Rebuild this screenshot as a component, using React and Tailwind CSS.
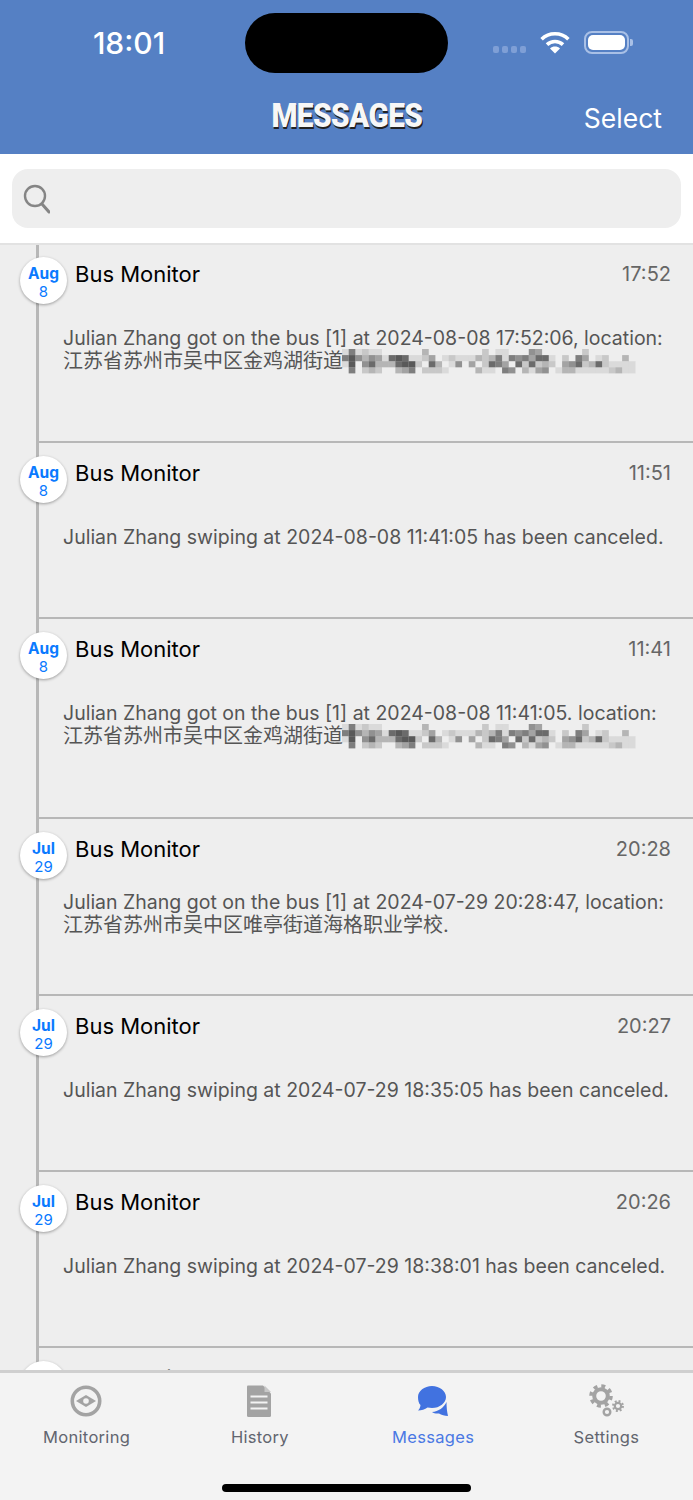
import React from "react";

const SANS = "font-['Inter','Noto_Sans_CJK_SC',sans-serif]";

const messages = [
  { month: "Aug", day: "8", time: "17:52", h: "h-[199px]", text: "Julian Zhang got on the bus [1] at 2024-08-08 17:52:06, location:", addr: "江苏省苏州市吴中区金鸡湖街道", blurred: true },
  { month: "Aug", day: "8", time: "11:51", h: "h-[176.3px]", text: "Julian Zhang swiping at 2024-08-08 11:41:05 has been canceled." },
  { month: "Aug", day: "8", time: "11:41", h: "h-[200px]", text: "Julian Zhang got on the bus [1] at 2024-08-08 11:41:05. location:", addr: "江苏省苏州市吴中区金鸡湖街道", blurred: true },
  { month: "Jul", day: "29", time: "20:28", h: "h-[176.3px]", gap: "mt-[27px]", text: "Julian Zhang got on the bus [1] at 2024-07-29 20:28:47, location:", addr: "江苏省苏州市吴中区唯亭街道海格职业学校." },
  { month: "Jul", day: "29", time: "20:27", h: "h-[176.3px]", text: "Julian Zhang swiping at 2024-07-29 18:35:05 has been canceled." },
  { month: "Jul", day: "29", time: "20:26", h: "h-[176.3px]", text: "Julian Zhang swiping at 2024-07-29 18:38:01 has been canceled." },
  { month: "Jul", day: "29", time: "20:25", h: "h-[176.3px]", text: "" },
];

// pixelated address, one digit per block = darkness
const MOSAIC = [
  "16121100000030000000020110005400000020000000",
  "68535417871124012111323616564771020640120030",
  "18057333788207301504027640727232045723721111",
  "06023200346022210000311065031450133111112311",
];

function Mosaic() {
  return (
    <svg className="inline-block align-top overflow-visible" width="294" height="23" viewBox="0 0 294 23">
      {MOSAIC.map((row, y) =>
        row.split("").map((d, x) =>
          d === "0" ? null : (
            <rect key={y + "-" + x} x={x * 6.67 - 1} y={y * 6.1 - 1} width="6.67" height="6.1" fill="#333" opacity={Number(d) / 10} />
          )
        )
      )}
    </svg>
  );
}

function StatusIcons() {
  return (
    <div className="flex items-center">
      <div className="flex gap-[3px] mt-[13px] mr-[14px]">
        {[0, 1, 2, 3].map((i) => (
          <div key={i} className="w-[6px] h-[7px] rounded-[2px] bg-[#7f9fd6]" />
        ))}
      </div>
      <svg width="30" height="24" viewBox="0 0 30 24" fill="none" stroke="#fff" strokeWidth="3.6" className="mr-[14px] -mt-[3px]">
        <path d="M1.6 9.2C9 2 21 2 28.4 9.2" />
        <path d="M7 14.6c4.4-4.2 11.6-4.2 16 0" />
        <path d="M15 23.5l-5-5c2.800-2.600 7.200-2.600 10 0z" fill="#fff" stroke="none" />
      </svg>
      <div className="w-[45px] h-[23px] rounded-[8px] border-2 border-[#a9c0e6] p-[2px] -mt-[2px]">
        <div className="w-full h-full rounded-[5px] bg-white" />
      </div>
      <div className="w-[3px] h-[7px] rounded-r-[2px] bg-[#a9c0e6] ml-[1px] -mt-[2px]" />
    </div>
  );
}

function Row({ m }) {
  return (
    <div className={"relative ml-[36px] border-l-[3px] border-b-2 border-[#b7b7b7] " + m.h}>
      <div className="absolute left-[-19px] top-[13px] w-[47px] h-[47px] rounded-full bg-white shadow-[0_1px_3px_rgba(0,0,0,0.35)] flex flex-col items-center pt-[8px] text-[#0a7aff]">
        <div className="text-[15.500px] leading-[18px] font-bold">{m.month}</div>
        <div className="text-[15px] leading-[18px]">{m.day}</div>
      </div>
      <div className="flex justify-between items-center pl-[36px] pr-[22px] pt-[15px]">
        <div className="text-[22px] leading-[30px] text-black">Bus Monitor</div>
        <div className="text-[20px] leading-[30px] text-[#666]">{m.time}</div>
      </div>
      <div className={"pl-[24px] text-[19.500px] leading-[23px] text-[#555] whitespace-nowrap " + (m.gap || "mt-[38px]")}>
        <div>{m.text}</div>
        {m.addr && (
          <div className="text-[20px]">
            {m.addr}
            {m.blurred && <Mosaic />}
          </div>
        )}
      </div>
    </div>
  );
}

function Gear({ cx, cy, r, w }) {
  const teeth = r + w * 0.8;
  const c = 2 * Math.PI * teeth;
  return (
    <g fill="none" stroke="#a3a3a3">
      <circle cx={cx} cy={cy} r={r} strokeWidth={w} />
      <circle cx={cx} cy={cy} r={teeth} strokeWidth={w * 0.9} strokeDasharray={`${c / 16} ${c / 16}`} />
    </g>
  );
}

const tabs = [
  {
    label: "Monitoring",
    icon: (
      <svg width="34" height="34" viewBox="0 0 34 34" className="-ml-[2px]">
        <circle cx="17" cy="17" r="13.700" fill="none" stroke="#a3a3a3" strokeWidth="3.600" />
        <path d="M7 17l10-6 10 6-10 6z" fill="#a3a3a3" />
        <circle cx="17" cy="17" r="2.800" fill="#f3f3f3" />
      </svg>
    ),
  },
  {
    label: "History",
    icon: (
      <svg width="34" height="34" viewBox="0 0 34 34" className="-ml-[3px]">
        <path d="M6 2.500a1 1 0 0 1 1-1h15l8 8v22a1.500 1.500 0 0 1-1.500 1.500h-21a1.500 1.500 0 0 1-1.500-1.500z" fill="#a3a3a3" />
        <path d="M23.500 1.500l6.500 6.500h-6.500z" fill="#c8c8c8" />
        <path d="M9.500 12.500h17M9.500 18.500h17M9.500 24.500h17" stroke="#f3f3f3" strokeWidth="2.200" />
      </svg>
    ),
  },
  {
    label: "Messages",
    active: true,
    icon: (
      <svg width="34" height="34" viewBox="0 0 34 34">
        <path d="M16 2c7.700 0 14 5 14 11s-6.300 11-14 11c-1.600 0-3-.2-4.500-.5-2.500 1.800-6 3-9.500 3 1.300-1.200 2.300-3 2.500-5.500C2.800 19.800 2 16.500 2 13 2 7 8.300 2 16 2z" fill="#4172e0" />
        <path d="M30.500 18c0 5 .5 10 1.500 14-3.500 0-6.500-1-9-2.500-2.500.3-5 0-7-1.500 6.500-.5 12-4.500 14.500-10z" fill="#4172e0" />
      </svg>
    ),
  },
  {
    label: "Settings",
    icon: (
      <svg width="38" height="36" viewBox="0 0 38 36">
        <Gear cx={14} cy={13} r={6.8} w={4} />
        <Gear cx={31} cy={23} r={3.2} w={2.2} />
        <circle cx="20" cy="29" r="3.300" fill="none" stroke="#a3a3a3" strokeWidth="2.400" />
      </svg>
    ),
  },
];

export default function App() {
  return (
    <div className={"h-[1500px] flex flex-col overflow-hidden bg-[#eeeeee] " + SANS}>
      <header className="h-[154px] shrink-0 bg-[#5580c4] flex flex-col">
        <div className="h-[86px] pt-[13px] flex items-start justify-between">
          <div className="w-[245px] text-center pt-[10px] pl-[13px] text-[30px] leading-[40px] font-medium text-white">18:01</div>
          <div className="w-[203px] h-[60px] rounded-[30px] bg-black" />
          <div className="w-[245px] h-[60px] flex items-center pl-[45px]">
            <StatusIcons />
          </div>
        </div>
        <div className="relative flex-1 flex justify-center">
          <div className="pt-[12px] font-['Roboto',sans-serif] font-black text-[33px] leading-[36px] tracking-[-0.6px] scale-x-[0.9] text-[#f7f7f7] [text-shadow:1px_1.500px_0_#222]">
            MESSAGES
          </div>
          <div className="absolute right-[31px] top-[14px] text-[26.500px] leading-[36px] text-white">Select</div>
        </div>
      </header>

      <div className="relative z-10 shrink-0 h-[91px] -mb-px bg-white border-b-2 border-[#e2e2e2] px-[12px] pt-[15px]">
        <div className="h-[59px] rounded-[16px] bg-[#eeeeee] flex items-center pl-[10px]">
          <svg width="28" height="30" viewBox="0 0 28 30" fill="none" stroke="#858585">
            <circle cx="13" cy="12" r="10" strokeWidth="2.400" />
            <path d="M20 20l7 8" strokeWidth="3" strokeLinecap="round" />
          </svg>
        </div>
      </div>

      <div className="flex-1 min-h-0 overflow-hidden">
        {messages.map((m, i) => (
          <Row key={i} m={m} />
        ))}
      </div>

      <nav className="relative shrink-0 h-[130px] bg-[#f3f3f3] border-t-[3px] border-[#cfcfcf] grid grid-cols-4">
        {tabs.map((t) => (
          <div key={t.label} className="flex flex-col items-center pt-[10px]">
            <div className="h-[36px] flex items-center justify-center">{t.icon}</div>
            <div className={"mt-[6px] text-[16.500px] leading-[24px] tracking-[0.3px] " + (t.active ? "text-[#4a78e4]" : "text-[#62656f]")}>
              {t.label}
            </div>
          </div>
        ))}
        <div className="absolute left-[222px] bottom-[8px] w-[249px] h-[8px] rounded-full bg-black" />
      </nav>
    </div>
  );
}
